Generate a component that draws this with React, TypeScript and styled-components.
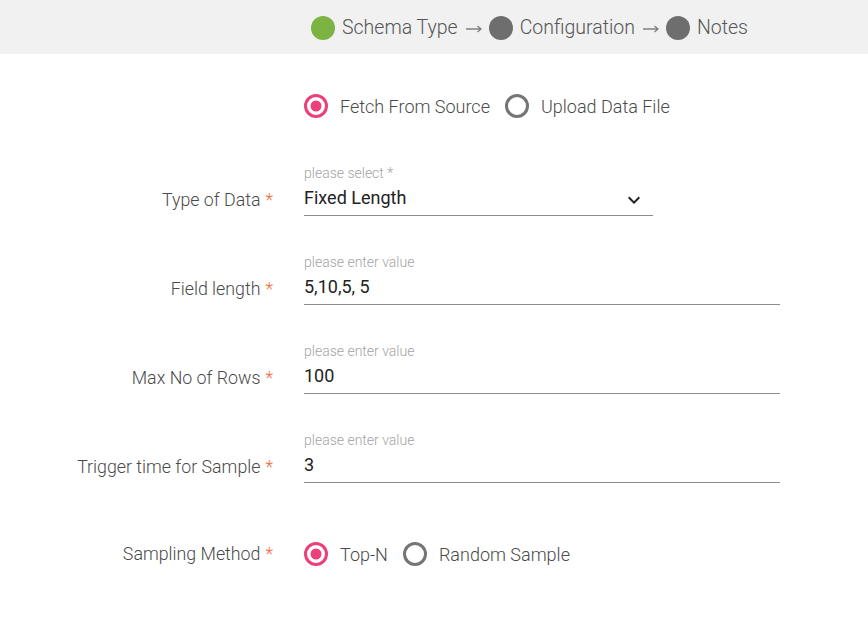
import React from "react";
import styled, { createGlobalStyle } from "styled-components";

const Global = createGlobalStyle`
  html, body { margin: 0; padding: 0; background: #ffffff; }
  body { font-family: Roboto, "Noto Sans", "Liberation Sans", sans-serif; }
  * { box-sizing: border-box; }
`;

const Page = styled.div`
  width: 868px;
  min-height: 644px;
  background: #fff;
`;

const Header = styled.header`
  height: 54px;
  background: #f1f1f1;
  display: flex;
  align-items: center;
  padding-left: 311px;
  padding-top: 2px;
  gap: 6px;
`;

const Dot = styled.span<{ $active?: boolean }>`
  width: 24px;
  height: 24px;
  border-radius: 50%;
  background: ${(p) => (p.$active ? "#7cb342" : "#6e6e6e")};
  flex: none;
`;

const StepLabel = styled.span`
  font-size: 19.5px;
  font-weight: 300;
  color: #555;
  margin-left: 1px;
  line-height: 24px;
`;

const Arrow = styled.svg`
  width: 18px;
  height: 24px;
  flex: none;
  margin-left: 1px;
`;

const Main = styled.main`
  padding-top: 40px;
  display: grid;
  grid-template-columns: 273px 476px;
  column-gap: 31px;
  align-items: start;
`;

const RadioGroup = styled.div<{ $top?: number }>`
  display: flex;
  align-items: center;
  height: 24px;
  gap: 15px;
  margin-top: ${(p) => p.$top ?? 0}px;
`;

const RadioItem = styled.label`
  display: flex;
  align-items: center;
  gap: 12px;
  font-size: 18px;
  font-weight: 300;
  color: #4a4a4a;
  cursor: pointer;
`;

const Label = styled.div<{ $top?: number }>`
  text-align: right;
  font-size: 17.8px;
  font-weight: 300;
  line-height: 24px;
  color: #4a4a4a;
  margin-top: ${(p) => p.$top ?? 0}px;
`;

const Star = styled.span`
  color: #f4683c;
  margin-left: 5px;
`;

const Field = styled.div<{ $width: number; $top: number }>`
  width: ${(p) => p.$width}px;
  margin-top: ${(p) => p.$top}px;
  border-bottom: 1px solid #8c8c8c;
  padding-bottom: 5px;
`;

const Helper = styled.div`
  font-size: 14px;
  line-height: 16px;
  color: #a3a3a3;
  font-weight: 300;
  margin-bottom: 5px;
`;

const ValueRow = styled.div`
  display: flex;
  align-items: center;
  justify-content: space-between;
  font-size: 18px;
  line-height: 24px;
  color: #222;
  height: 24px;
`;

const Chevron = styled.svg`
  width: 24px;
  height: 24px;
  margin-right: 7px;
  margin-top: 3px;
`;

const Radio = ({ checked }: { checked?: boolean }) => (
  <svg width="24" height="24" viewBox="0 0 24 24">
    <circle
      cx="12"
      cy="12"
      r="10.5"
      fill="none"
      stroke={checked ? "#ec407a" : "#757575"}
      strokeWidth="3"
    />
    {checked && <circle cx="12" cy="12" r="5.5" fill="#ec407a" />}
  </svg>
);

const StepArrow = () => (
  <Arrow viewBox="0 0 18 24">
    <path d="M1 13h15M12.5 10l3.5 3-3.5 3" fill="none" stroke="#808080" strokeWidth="1.3" />
  </Arrow>
);

const Spacer = styled.div``;

const fields = [
  { label: "Field length", value: "5,10,5, 5" },
  { label: "Max No of Rows", value: "100" },
  { label: "Trigger time for Sample", value: "3" },
];

export default function App() {
  return (
    <Page>
      <Global />
      <Header>
        <Dot $active />
        <StepLabel>Schema Type</StepLabel>
        <StepArrow />
        <Dot />
        <StepLabel>Configuration</StepLabel>
        <StepArrow />
        <Dot />
        <StepLabel>Notes</StepLabel>
      </Header>
      <Main>
        <Spacer />
        <RadioGroup>
          <RadioItem>
            <Radio checked />
            Fetch From Source
          </RadioItem>
          <RadioItem>
            <Radio />
            Upload Data File
          </RadioItem>
        </RadioGroup>

        <Label $top={70}>
          Type of Data<Star>*</Star>
        </Label>
        <Field $width={349} $top={47}>
          <Helper>please select *</Helper>
          <ValueRow>
            Fixed Length
            <Chevron viewBox="0 0 24 24">
              <path
                d="M7.41 8.59 12 13.17l4.59-4.58L18 10l-6 6-6-6 1.41-1.41z"
                fill="#222"
              />
            </Chevron>
          </ValueRow>
        </Field>

        {fields.map((f) => (
          <React.Fragment key={f.label}>
            <Label $top={61}>
              {f.label}
              <Star>*</Star>
            </Label>
            <Field $width={476} $top={38}>
              <Helper>please enter value</Helper>
              <ValueRow>{f.value}</ValueRow>
            </Field>
          </React.Fragment>
        ))}

        <Label $top={59}>
          Sampling Method<Star>*</Star>
        </Label>
        <RadioGroup $top={59}>
          <RadioItem>
            <Radio checked />
            Top-N
          </RadioItem>
          <RadioItem>
            <Radio />
            Random Sample
          </RadioItem>
        </RadioGroup>
      </Main>
    </Page>
  );
}
